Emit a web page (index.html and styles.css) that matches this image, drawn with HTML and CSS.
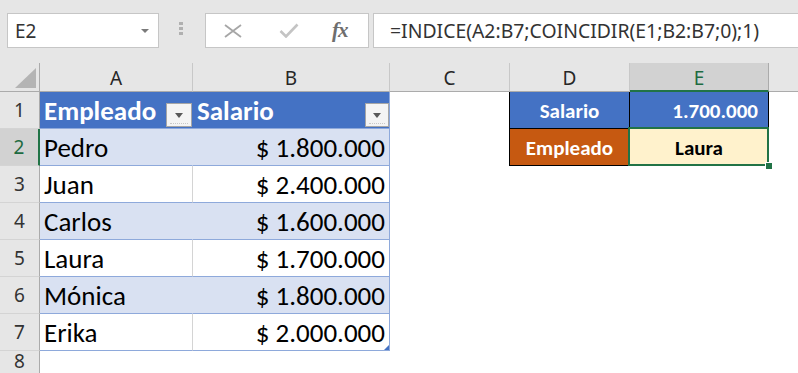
FILE: index.html
```html
<html>
<head>
<meta charset="utf-8">
<title>INDICE / COINCIDIR</title>
<link rel="stylesheet" href="styles.css">
</head>
<body>

<div class="toolbar">
  <div class="namebox"><span>E2</span><span class="caret"></span></div>
  <div class="grip"><i></i><i></i><i></i></div>
  <div class="fxbox">
    <svg class="ico-x" width="18" height="14" viewBox="0 0 18 14">
      <path d="M1 1 L17 13 M17 1 L1 13" stroke="#a6a6a6" stroke-width="1.8" fill="none"/>
    </svg>
    <svg class="ico-ok" width="20" height="15" viewBox="0 0 20 15">
      <path d="M1.5 8 L7 13.5 L18.5 1.5" stroke="#c4c4c4" stroke-width="2.6" fill="none"/>
    </svg>
    <span class="ico-fx">fx</span>
  </div>
  <div class="formula">=INDICE(A2:B7;COINCIDIR(E1;B2:B7;0);1)</div>
</div>

<div class="sheet">
  <!-- column headers -->
  <div class="colhead corner"><span class="tri"></span></div>
  <div class="colhead">A</div>
  <div class="colhead">B</div>
  <div class="colhead">C</div>
  <div class="colhead">D</div>
  <div class="colhead sel">E</div>
  <div class="colhead last"></div>

  <!-- row 1 -->
  <div class="rowhead">1</div>
  <div class="th">Empleado<span class="filter wide"></span></div>
  <div class="th end">Salario<span class="filter"></span></div>
  <div class="cell edge"></div>
  <div class="key blue">Salario</div>
  <div class="key blue num">1.700.000</div>
  <div class="cell"></div>

  <!-- row 2 -->
  <div class="rowhead sel">2</div>
  <div class="td band">Pedro</div>
  <div class="td amount band">$ 1.800.000</div>
  <div class="cell edge"></div>
  <div class="key orange">Empleado</div>
  <div class="key result">Laura<span class="cursor"><span class="handle"></span></span></div>
  <div class="cell"></div>

  <!-- row 3 -->
  <div class="rowhead">3</div>
  <div class="td">Juan</div>
  <div class="td amount">$ 2.400.000</div>
  <div class="cell"></div><div class="cell"></div><div class="cell"></div><div class="cell"></div>

  <!-- row 4 -->
  <div class="rowhead">4</div>
  <div class="td band">Carlos</div>
  <div class="td amount band">$ 1.600.000</div>
  <div class="cell"></div><div class="cell"></div><div class="cell"></div><div class="cell"></div>

  <!-- row 5 -->
  <div class="rowhead">5</div>
  <div class="td">Laura</div>
  <div class="td amount">$ 1.700.000</div>
  <div class="cell"></div><div class="cell"></div><div class="cell"></div><div class="cell"></div>

  <!-- row 6 -->
  <div class="rowhead">6</div>
  <div class="td band">Mónica</div>
  <div class="td amount band">$ 1.800.000</div>
  <div class="cell"></div><div class="cell"></div><div class="cell"></div><div class="cell"></div>

  <!-- row 7 -->
  <div class="rowhead">7</div>
  <div class="td">Erika</div>
  <div class="td amount">$ 2.000.000<span class="resize"></span></div>
  <div class="cell"></div><div class="cell"></div><div class="cell"></div><div class="cell"></div>

  <!-- row 8 -->
  <div class="rowhead top">8</div>
  <div class="cell"></div><div class="cell"></div><div class="cell"></div><div class="cell"></div><div class="cell"></div><div class="cell"></div>
</div>

</body>
</html>
```

FILE: styles.css
```css
* { box-sizing: border-box; }

body {
  margin: 0;
  width: 798px;
  height: 373px;
  overflow: hidden;
  background: #fff;
  font-family: "Noto Sans", "Open Sans", sans-serif;
}

/* Formula bar */

.toolbar {
  display: flex;
  align-items: flex-start;
  height: 63px;
  padding: 13px 0 0 7px;
  background: #e6e6e6;
}

.namebox,
.fxbox,
.formula {
  height: 35px;
  background: #fff;
  border: 1px solid #c6c6c6;
  display: flex;
  align-items: center;
}

.namebox {
  width: 152px;
  justify-content: space-between;
  padding: 0 9px 0 7px;
  font-size: 19px;
  color: #333;
}

.caret {
  width: 0;
  height: 0;
  border-left: 4px solid transparent;
  border-right: 4px solid transparent;
  border-top: 4px solid #7a7a7a;
}

.grip {
  display: flex;
  flex-direction: column;
  gap: 2px;
  margin: 9px 22px 0 20px;
}

.grip i {
  display: block;
  width: 4px;
  height: 3px;
  background: #b0b0b0;
}

.fxbox {
  width: 164px;
  padding-left: 18px;
}

.ico-ok { margin-left: 37px; }

.ico-fx {
  margin-left: 33px;
  font-family: "Liberation Serif", serif;
  font-style: italic;
  font-weight: bold;
  font-size: 21px;
  color: #6e6e6e;
  letter-spacing: -1px;
}

.formula {
  flex: 1;
  margin-left: 4px;
  border-right: none;
  padding-left: 16px;
  font-size: 19.4px;
  color: #333;
  white-space: nowrap;
}

/* Sheet grid */

.sheet {
  display: grid;
  grid-template-columns: 40px 153px 197px 120px 120px 139px 1fr;
  grid-template-rows: 29px repeat(7, 37px) 1fr;
  height: 310px;
}

.colhead {
  display: flex;
  align-items: center;
  justify-content: center;
  background: #e6e6e6;
  border-right: 1px solid #c8c8c8;
  border-bottom: 1px solid #ababab;
  font-size: 19px;
  color: #262626;
  padding-top: 2px;
}

.colhead.sel {
  background: #d2d2d2;
  color: #1e6b41;
  border-bottom: 2px solid #217346;
  border-right-color: #ababab;
}

.colhead.last { border-right: none; }

.corner {
  position: relative;
  border-right-color: #ababab;
}

.corner .tri {
  position: absolute;
  left: 15px;
  top: 5px;
  width: 21px;
  height: 20px;
  background: #b4b4b4;
  clip-path: polygon(100% 0, 100% 100%, 0 100%);
}

.rowhead {
  display: flex;
  align-items: center;
  justify-content: center;
  background: #e6e6e6;
  border-right: 1px solid #ababab;
  border-bottom: 1px solid #d4d4d4;
  font-size: 19px;
  color: #333;
}

.rowhead.sel {
  background: #d2d2d2;
  color: #1e6b41;
  border-right: 2px solid #217346;
}

.rowhead.top {
  align-items: flex-start;
  line-height: 21px;
  border-bottom: none;
}

/* Table */

.th,
.td {
  position: relative;
  display: flex;
  align-items: center;
  padding: 0 4px;
  font-family: Carlito, Lato, sans-serif;
  font-size: 27px;
  border-bottom: 1px solid #8ea9db;
}

.th {
  background: #4472c4;
  color: #fff;
  font-weight: bold;
  padding-top: 1px;
}

.th.end { border-right: 1px solid #8ea9db; }

.filter {
  position: absolute;
  right: 0;
  bottom: 1px;
  width: 24px;
  height: 24px;
  background: #f4f4f4;
  border: 1px solid #a6a6a6;
  display: flex;
  justify-content: center;
  padding-top: 9px;
}

.filter.wide {
  right: 1px;
  width: 26px;
}

.filter::before {
  content: "";
  width: 0;
  height: 0;
  border-left: 4px solid transparent;
  border-right: 4px solid transparent;
  border-top: 5px solid #595959;
}

.filter::after {
  content: "";
  position: absolute;
  left: 3px;
  right: 3px;
  bottom: 2px;
  border-bottom: 1px dotted #c8c8c8;
}

.td {
  color: #000;
  border-right: 1px solid #d4d4d4;
}

.td.band {
  background: #d9e1f2;
  border-right-color: transparent;
}

.td.amount {
  justify-content: flex-end;
  border-right: 1px solid #8ea9db;
}

.resize {
  position: absolute;
  right: 0;
  bottom: 0;
  width: 5px;
  height: 5px;
  background: #4472c4;
  clip-path: polygon(100% 0, 100% 100%, 0 100%);
}

/* Lookup block */

.cell { background: #fff; }

.cell.edge { border-right: 1px solid #000; }

.key {
  position: relative;
  display: flex;
  align-items: center;
  justify-content: center;
  font-family: Carlito, Lato, sans-serif;
  font-size: 21px;
  font-weight: bold;
  color: #fff;
  border-right: 1px solid #000;
  border-bottom: 1px solid #000;
  padding-top: 2px;
}

.key.blue { background: #4472c4; }
.key.orange { background: #c65911; }

.key.num {
  justify-content: flex-end;
  padding-right: 10px;
}

.key.result {
  background: #fff2cc;
  color: #000;
}

.cursor {
  position: absolute;
  left: -2px;
  top: -2px;
  right: -1px;
  bottom: -1px;
  border: 2px solid #217346;
}

.handle {
  position: absolute;
  right: -5px;
  bottom: -5px;
  width: 7px;
  height: 7px;
  background: #217346;
  border: 1px solid #fff;
  border-right: none;
  border-bottom: none;
}
```
